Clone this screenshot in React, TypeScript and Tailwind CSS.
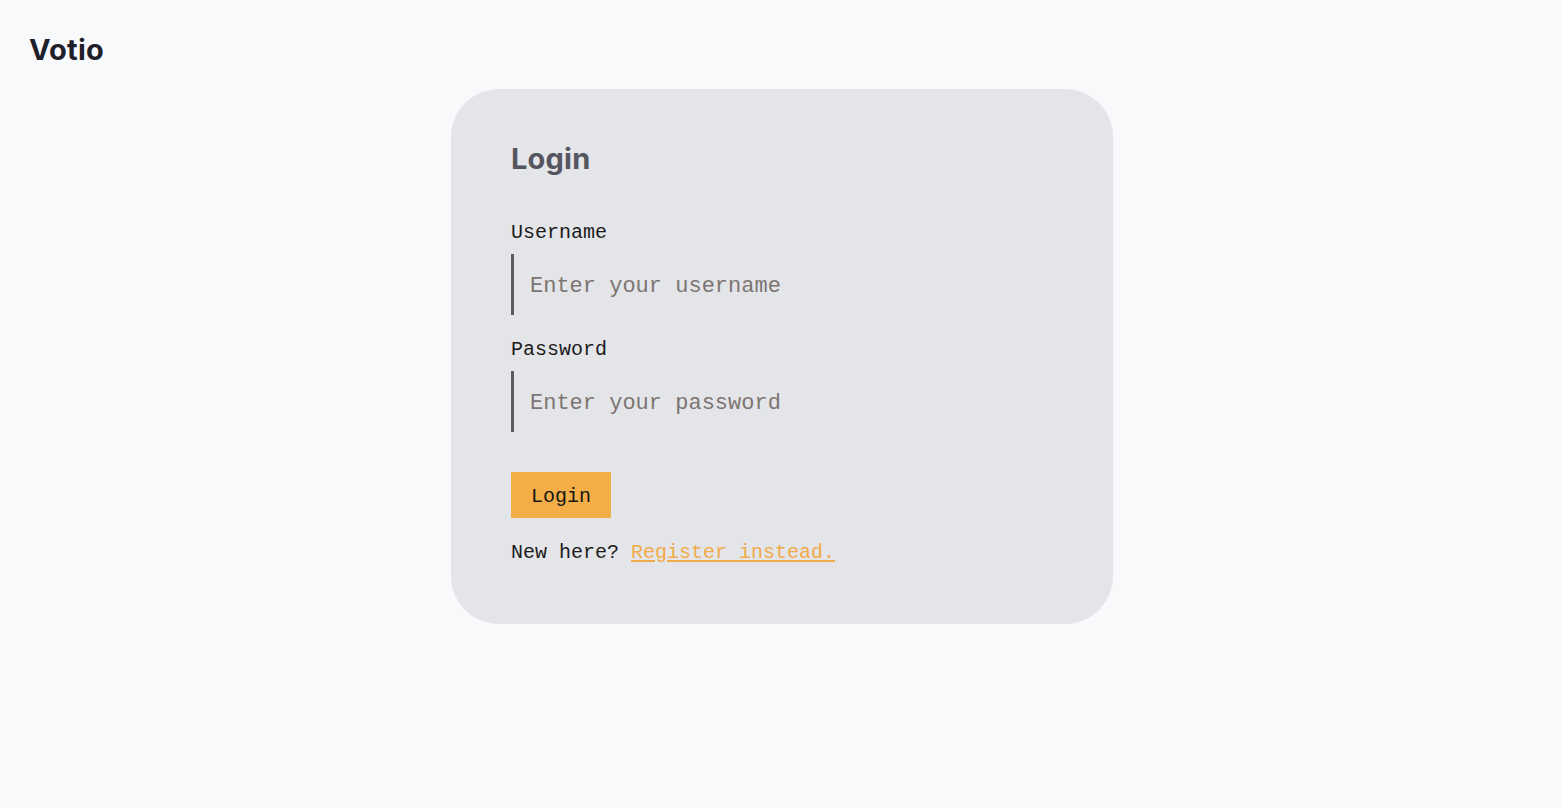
import { useState } from "react";

export default function App() {
    const [username, setUsername] = useState("");
    const [password, setPassword] = useState("");

    return (
        <div className="min-h-screen bg-[#f8f9fb] font-['Inter',sans-serif] pl-[2px]">
            <header className="px-[27px] pt-[30px]">
                <h1 className="text-[29px] leading-[40px] font-bold text-[#1f1f2b] tracking-[0.2px]">Votio</h1>
            </header>

            <div className="mt-[19px] mx-auto w-[662px] bg-[#e4e5e9] rounded-[48px] px-[60px] pt-[50px] pb-[57px]">
                <h2 className="text-[29px] leading-[40px] font-bold text-[#555560] tracking-[0.2px]">Login</h2>

                <form
                    onSubmit={(e) => e.preventDefault()}
                    className="mt-[40px] flex flex-col font-['Liberation_Mono',monospace]"
                >
                    <label className="text-[20px] leading-[28px] text-[#1c1c1c]">Username</label>
                    <input
                        type="text"
                        placeholder="Enter your username"
                        value={username}
                        onChange={(e) => setUsername(e.target.value)}
                        className="mt-[7px] h-[61px] w-full bg-transparent border-l-[3px] border-[#5b5b66] pl-4 pt-1 text-[22px] text-[#1c1c1c] placeholder:text-[#7c7571] outline-none"
                    />

                    <label className="mt-[21px] text-[20px] leading-[28px] text-[#1c1c1c]">Password</label>
                    <input
                        type="password"
                        placeholder="Enter your password"
                        value={password}
                        onChange={(e) => setPassword(e.target.value)}
                        className="mt-[7px] h-[61px] w-full bg-transparent border-l-[3px] border-[#5b5b66] pl-4 pt-1 text-[22px] text-[#1c1c1c] placeholder:text-[#7c7571] outline-none"
                    />

                    <button
                        type="submit"
                        className="mt-[40px] self-start w-[100px] h-[46px] bg-[#f3ae47] pt-1 text-[20px] text-[#161616]"
                    >
                        Login
                    </button>

                    <p className="mt-[21px] text-[20px] leading-[28px] text-[#1c1c1c]">
                        New here?{" "}
                        <a href="#" className="text-[#f0aa4a] underline underline-offset-2">
                            Register instead.
                        </a>
                    </p>
                </form>
            </div>
        </div>
    );
}
